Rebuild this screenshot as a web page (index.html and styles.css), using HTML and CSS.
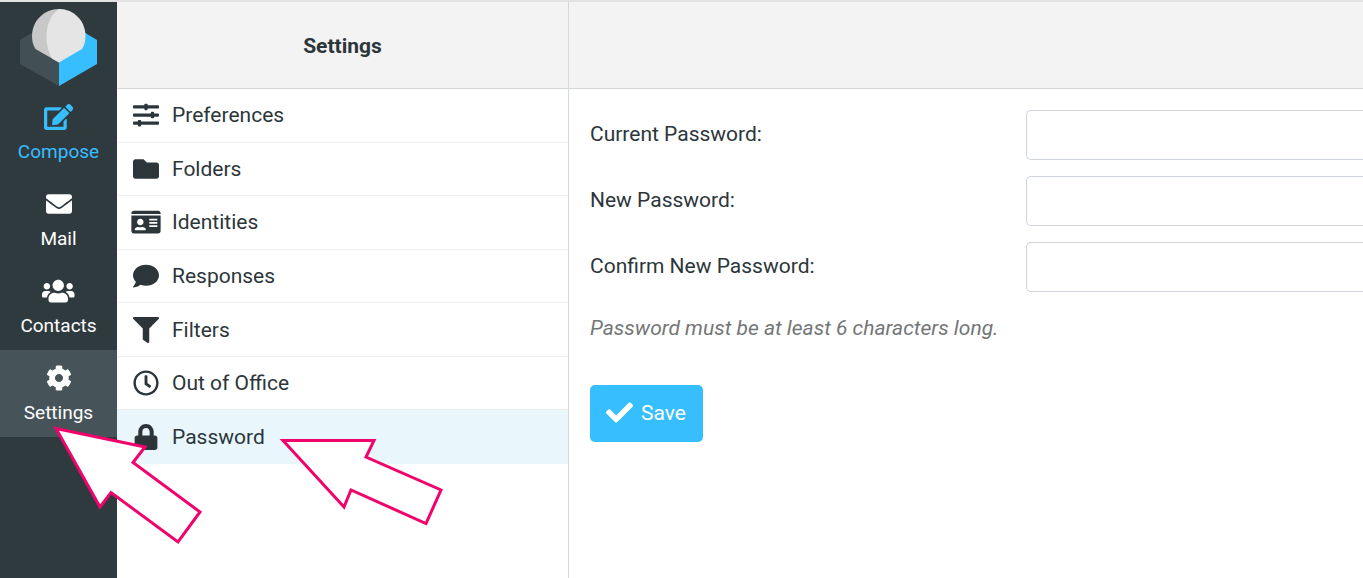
FILE: index.html
```html
<!DOCTYPE html>
<html lang="en">
<head>
    <meta charset="UTF-8">
    <title>Settings</title>
    <link rel="stylesheet" href="styles.css">
</head>
<body>
<div id="layout">
    <nav id="taskmenu">
        <svg class="logo" viewBox="0 0 78 78" aria-hidden="true">
            <path fill="#425056" d="M0 31L39 8v69L0 55z"/>
            <path fill="#37beff" d="M39 8l38 23v24L39 77z"/>
            <path fill="#c8c8c8" d="M39 0C24 0 12 12 12 27c0 5 1 9 3.500 13L39 53.500 45 40V1z"/>
            <path fill="#e5e5e5" d="M39 0c15 0 26.500 12 26.500 27 0 5-1 9-3.500 13L39 53.500 32 49.500C28 43 26.500 35 26.500 27 26.500 16 31 5 39 0z"/>
        </svg>
        <a class="task compose" href="#compose">
            <svg viewBox="0 0 576 512" aria-hidden="true"><path d="M402.600 83.200l90.200 90.200c3.800 3.800 3.800 10 0 13.800L274.400 405.600l-92.800 10.300c-12.400 1.400-22.900-9.100-21.500-21.500l10.300-92.800L388.800 83.200c3.800-3.800 10-3.800 13.800 0zm162-22.900l-48.800-48.800c-15.200-15.200-39.900-15.200-55.200 0l-35.400 35.400c-3.800 3.800-3.800 10 0 13.800l90.200 90.200c3.800 3.800 10 3.800 13.800 0l35.400-35.400c15.200-15.300 15.200-40 0-55.200zM384 346.200V448H64V128h229.800c3.200 0 6.200-1.300 8.500-3.500l40-40c7.600-7.600 2.200-20.500-8.500-20.500H48C21.500 64 0 85.500 0 112v352c0 26.500 21.500 48 48 48h352c26.500 0 48-21.500 48-48V306.200c0-10.700-12.900-16-20.500-8.500l-40 40c-2.200 2.300-3.500 5.300-3.500 8.500z"/></svg>
            <span>Compose</span>
        </a>
        <a class="task" href="#mail">
            <svg viewBox="0 0 512 512" aria-hidden="true"><path d="M502.300 190.800c3.900-3.100 9.700-.2 9.700 4.700V400c0 26.500-21.500 48-48 48H48c-26.500 0-48-21.500-48-48V195.600c0-5 5.700-7.800 9.700-4.700 22.400 17.400 52.100 39.500 154.100 113.600 21.100 15.400 56.700 47.800 92.200 47.600 35.700.3 72-32.800 92.300-47.600 102-74.100 131.600-96.300 154-113.700zM256 320c23.200.4 56.600-29.200 73.400-41.400 132.700-96.300 142.800-104.700 173.400-128.700 5.800-4.500 9.200-11.500 9.200-18.900v-19c0-26.500-21.500-48-48-48H48c-26.500 0-48 21.500-48 48v19c0 7.400 3.400 14.300 9.200 18.900 30.600 23.900 40.700 32.400 173.400 128.700 16.800 12.200 50.200 41.800 73.400 41.400z"/></svg>
            <span>Mail</span>
        </a>
        <a class="task" href="#contacts">
            <svg viewBox="0 0 640 512" aria-hidden="true"><path d="M96 224c35.300 0 64-28.700 64-64s-28.700-64-64-64-64 28.700-64 64 28.700 64 64 64zm448 0c35.300 0 64-28.700 64-64s-28.700-64-64-64-64 28.700-64 64 28.700 64 64 64zm32 32h-64c-17.600 0-33.500 7.100-45.100 18.600 40.300 22.100 68.900 62 75.100 109.400h66c17.700 0 32-14.300 32-32v-32c0-35.300-28.700-64-64-64zm-256 0c61.900 0 112-50.100 112-112S381.900 32 320 32 208 82.100 208 144s50.100 112 112 112zm76.800 32h-8.300c-20.800 10-43.900 16-68.500 16s-47.600-6-68.500-16h-8.300C179.600 288 128 339.600 128 403.200V432c0 26.500 21.500 48 48 48h288c26.500 0 48-21.500 48-48v-28.800c0-63.600-51.600-115.200-115.200-115.200zm-223.700-13.400C161.500 263.100 145.600 256 128 256H64c-35.300 0-64 28.700-64 64v32c0 17.700 14.300 32 32 32h65.900c6.300-47.400 34.900-87.300 75.200-109.400z"/></svg>
            <span>Contacts</span>
        </a>
        <a class="task selected" href="#settings">
            <svg viewBox="0 0 512 512" aria-hidden="true"><path d="M487.400 315.700l-42.600-24.600c4.300-23.200 4.300-47 0-70.200l42.600-24.600c4.900-2.800 7.100-8.600 5.500-14-11.100-35.600-30-67.800-54.700-94.600-3.800-4.100-10-5.100-14.800-2.300L380.800 110c-17.900-15.400-38.500-27.300-60.800-35.100V25.800c0-5.600-3.900-10.500-9.400-11.700-36.700-8.200-74.300-7.800-109.200 0-5.500 1.200-9.400 6.100-9.400 11.700V75c-22.200 7.900-42.800 19.800-60.800 35.100L88.700 85.500c-4.900-2.800-11-1.900-14.800 2.300-24.700 26.700-43.600 58.900-54.700 94.600-1.700 5.400.6 11.200 5.500 14L67.300 221c-4.300 23.200-4.300 47 0 70.200l-42.600 24.600c-4.900 2.800-7.100 8.600-5.500 14 11.100 35.600 30 67.800 54.700 94.600 3.800 4.100 10 5.100 14.800 2.300l42.600-24.600c17.900 15.400 38.500 27.300 60.800 35.100v49.200c0 5.600 3.900 10.500 9.400 11.700 36.700 8.200 74.300 7.800 109.200 0 5.500-1.200 9.400-6.100 9.400-11.700v-49.200c22.200-7.900 42.800-19.800 60.800-35.100l42.600 24.600c4.900 2.800 11 1.900 14.800-2.300 24.700-26.700 43.600-58.900 54.700-94.600 1.500-5.500-.7-11.300-5.600-14.100zM256 336c-44.100 0-80-35.900-80-80s35.900-80 80-80 80 35.900 80 80-35.900 80-80 80z"/></svg>
            <span>Settings</span>
        </a>
    </nav>
    <div id="sidebar">
        <h1 class="header">Settings</h1>
        <div class="sections">
            <a class="section" href="#preferences">
                <svg viewBox="0 0 512 512" aria-hidden="true"><path d="M496 384H160v-16c0-8.800-7.200-16-16-16h-32c-8.800 0-16 7.200-16 16v16H16c-8.800 0-16 7.200-16 16v32c0 8.800 7.200 16 16 16h80v16c0 8.800 7.200 16 16 16h32c8.800 0 16-7.200 16-16v-16h336c8.800 0 16-7.200 16-16v-32c0-8.800-7.200-16-16-16zm0-160h-80v-16c0-8.800-7.200-16-16-16h-32c-8.800 0-16 7.200-16 16v16H16c-8.800 0-16 7.200-16 16v32c0 8.800 7.200 16 16 16h336v16c0 8.800 7.200 16 16 16h32c8.800 0 16-7.200 16-16v-16h80c8.800 0 16-7.200 16-16v-32c0-8.800-7.200-16-16-16zm0-160H288V48c0-8.800-7.200-16-16-16h-32c-8.800 0-16 7.200-16 16v16H16C7.200 64 0 71.200 0 80v32c0 8.800 7.200 16 16 16h208v16c0 8.800 7.200 16 16 16h32c8.800 0 16-7.200 16-16v-16h208c8.800 0 16-7.200 16-16V80c0-8.800-7.200-16-16-16z"/></svg>
                Preferences
            </a>
            <a class="section" href="#folders">
                <svg viewBox="0 0 512 512" aria-hidden="true"><path d="M464 128H272l-64-64H48C21.500 64 0 85.500 0 112v288c0 26.500 21.500 48 48 48h416c26.500 0 48-21.500 48-48V176c0-26.500-21.500-48-48-48z"/></svg>
                Folders
            </a>
            <a class="section" href="#identities">
                <svg viewBox="0 0 576 512" aria-hidden="true"><path fill-rule="evenodd" d="M528 32H48C21.500 32 0 53.500 0 80v16h576V80c0-26.500-21.500-48-48-48zM0 432c0 26.500 21.500 48 48 48h480c26.500 0 48-21.500 48-48V128H0v304zM352 200c0-4.400 3.600-8 8-8h144c4.400 0 8 3.600 8 8v16c0 4.400-3.600 8-8 8H360c-4.400 0-8-3.600-8-8zM352 264c0-4.400 3.600-8 8-8h144c4.400 0 8 3.600 8 8v16c0 4.400-3.600 8-8 8H360c-4.400 0-8-3.600-8-8zM352 328c0-4.400 3.600-8 8-8h144c4.400 0 8 3.600 8 8v16c0 4.400-3.600 8-8 8H360c-4.400 0-8-3.600-8-8zM176 192c35.300 0 64 28.700 64 64s-28.700 64-64 64-64-28.700-64-64 28.700-64 64-64zM67.100 396.200C75.500 370.500 99.600 352 128 352h8.200c12.300 5.100 25.700 8 39.800 8s27.600-2.900 39.800-8h8.200c28.400 0 52.500 18.500 60.900 44.200 3.200 9.900-5.200 19.800-15.600 19.800H82.700c-10.400 0-18.800-10-15.600-19.800z"/></svg>
                Identities
            </a>
            <a class="section" href="#responses">
                <svg viewBox="0 0 512 512" aria-hidden="true"><path d="M256 32C114.600 32 0 125.100 0 240c0 49.600 21.400 95 57 130.700C44.500 421.100 2.700 466 2.200 466.500c-2.200 2.300-2.800 5.700-1.500 8.700S4.800 480 8 480c66.300 0 116-31.800 140.600-51.400 32.700 12.300 69 19.400 107.400 19.400 141.400 0 256-93.100 256-208S397.400 32 256 32z"/></svg>
                Responses
            </a>
            <a class="section" href="#filters">
                <svg viewBox="0 0 512 512" aria-hidden="true"><path d="M487.976 0H24.028C2.710 0-8.047 25.866 7.058 40.971L192 225.941V432c0 7.831 3.821 15.170 10.237 19.662l80 55.980C298.020 518.690 320 507.493 320 487.980V225.941l184.947-184.970C520.021 25.896 509.338 0 487.976 0z"/></svg>
                Filters
            </a>
            <a class="section" href="#vacation">
                <svg viewBox="0 0 512 512" aria-hidden="true"><path d="M256 8C119 8 8 119 8 256s111 248 248 248 248-111 248-248S393 8 256 8zm0 448c-110.500 0-200-89.500-200-200S145.500 56 256 56s200 89.500 200 200-89.500 200-200 200zm61.800-104.400l-84.900-61.700c-3.100-2.300-4.900-5.900-4.900-9.700V116c0-6.600 5.400-12 12-12h32c6.600 0 12 5.400 12 12v141.700l66.800 48.600c5.400 3.900 6.500 11.400 2.600 16.800L334.600 349c-3.900 5.300-11.400 6.500-16.800 2.600z"/></svg>
                Out of Office
            </a>
            <a class="section selected" href="#password">
                <svg viewBox="0 0 448 512" aria-hidden="true"><path d="M400 224h-24v-72C376 68.200 307.800 0 224 0S72 68.200 72 152v72H48c-26.500 0-48 21.500-48 48v192c0 26.500 21.500 48 48 48h352c26.500 0 48-21.500 48-48V272c0-26.500-21.500-48-48-48zm-104 0H152v-72c0-39.700 32.300-72 72-72s72 32.300 72 72v72z"/></svg>
                Password
            </a>
        </div>
    </div>
    <main id="content">
        <div class="header"></div>
        <form class="password-form">
            <div class="field">
                <label for="curpasswd">Current Password:</label>
                <input type="password" id="curpasswd">
            </div>
            <div class="field">
                <label for="newpasswd">New Password:</label>
                <input type="password" id="newpasswd">
            </div>
            <div class="field">
                <label for="confpasswd">Confirm New Password:</label>
                <input type="password" id="confpasswd">
            </div>
            <p class="hint">Password must be at least 6 characters long.</p>
            <button class="save" type="button">
                <svg viewBox="0 0 512 512" aria-hidden="true"><path d="M173.898 439.404l-166.400-166.400c-9.997-9.997-9.997-26.206 0-36.204l36.203-36.204c9.997-9.998 26.207-9.998 36.204 0L192 312.690 432.095 72.596c9.997-9.997 26.207-9.997 36.204 0l36.203 36.204c9.997 9.997 9.997 26.206 0 36.204l-294.400 294.401c-9.998 9.997-26.207 9.997-36.204-.001z"/></svg>
                Save
            </button>
        </form>
    </main>
</div>
<!-- arrows pointing at Settings and Password -->
<svg class="arrows" width="460" height="560" aria-hidden="true">
    <path d="M56 428.500L145 447 133 462.500 200 512 178 542 111 492.500 100 507z"/>
    <path d="M283 440.500H374L366 457 441 490 426 523.500 351 490 344 507z"/>
</svg>
</body>
</html>
```
FILE: styles.css
```css
* {
    box-sizing: border-box;
}
body {
    margin: 0;
    font-family: Roboto, sans-serif;
    font-size: 21px;
    line-height: 32px;
    color: #2c363a;
    background-color: #fff;
    overflow: hidden;
}
a {
    color: inherit;
    text-decoration: none;
}
svg {
    fill: currentColor;
}
#layout {
    display: flex;
    min-height: 100vh;
    border-top: 2px solid #e2e2e2;
}

/* task menu */
#taskmenu {
    flex: 0 0 117px;
    background-color: #2f3a3f;
    color: #fff;
    font-size: 19px;
    line-height: 28px;
}
.logo {
    display: block;
    width: 78px;
    height: 78px;
    margin: 7px auto 2px;
}
.task {
    display: flex;
    flex-direction: column;
    align-items: center;
    gap: 8px;
    height: 87px;
    padding-top: 15px;
}
.task svg {
    height: 26px;
}
.task.compose {
    color: #37beff;
}
.task.selected {
    background-color: #465459;
}

/* settings sections */
#sidebar {
    flex: 0 0 452px;
    border-right: 1px solid #d3dade;
}
.header {
    display: flex;
    align-items: center;
    justify-content: center;
    height: 87px;
    margin: 0;
    padding-top: 2px;
    background-color: #f3f3f3;
    border-bottom: 1px solid #d3d6d8;
    font-size: 21px;
    font-weight: bold;
}
.sections {
    display: grid;
    grid-auto-rows: 1fr;
    min-height: 375px;
}
.section {
    display: flex;
    align-items: center;
    gap: 11px;
    padding-left: 14px;
    border-bottom: 1px solid #eceeef;
}
.section svg {
    width: 30px;
    height: 26px;
}
.section.selected {
    background-color: #e9f7fd;
    border-bottom-color: #e9f7fd;
}

/* password form */
#content {
    flex: 1;
    min-width: 0;
}
.password-form {
    padding: 21px 0 21px 21px;
}
.field {
    display: flex;
    align-items: center;
    margin-bottom: 16px;
}
.field label {
    flex: 0 0 436px;
    padding-bottom: 3px;
}
.field input {
    flex: 1;
    min-width: 0;
    height: 50px;
    padding: 8px 16px;
    border: 1px solid #ced4da;
    border-right: 0;
    border-radius: 5px 0 0 5px;
    font: inherit;
}
.hint {
    margin: 20px 0 41px;
    color: #737677;
    font-style: italic;
}
.save {
    display: flex;
    align-items: center;
    gap: 8px;
    height: 57px;
    padding: 0 17px 2px 16px;
    border: 0;
    border-radius: 5px;
    background-color: #37beff;
    color: #fff;
    font: inherit;
}
.save svg {
    width: 27px;
    height: 27px;
}

.arrows {
    position: absolute;
    top: 0;
    left: 0;
    fill: #fff;
    stroke: #f0046c;
    stroke-width: 3;
    pointer-events: none;
}
```
